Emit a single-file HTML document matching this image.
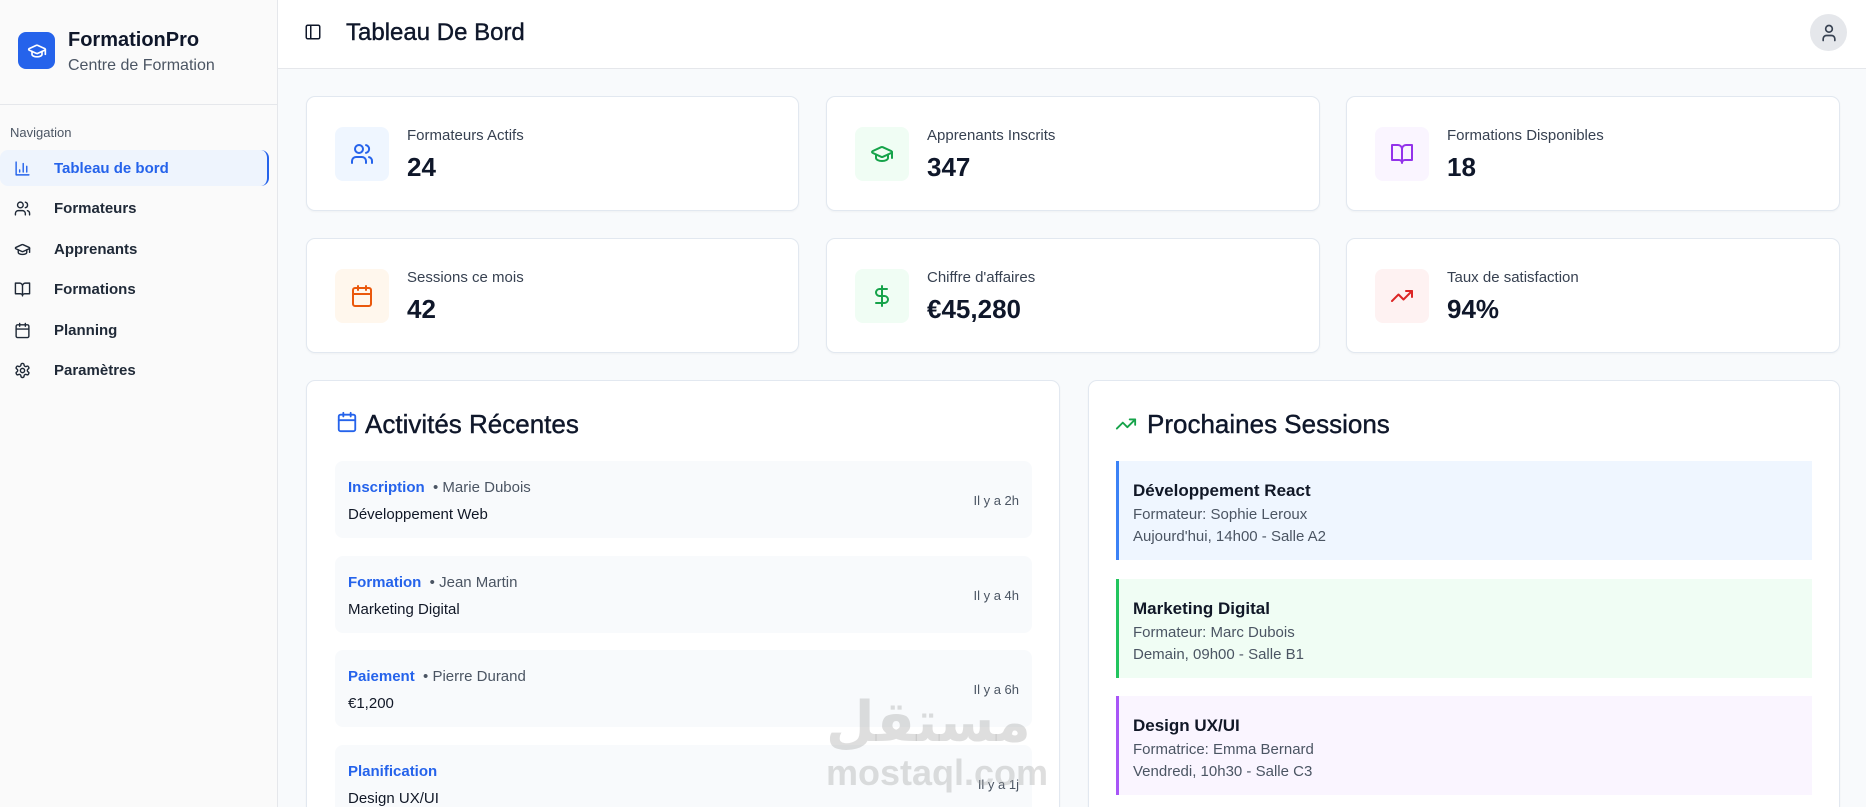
<!DOCTYPE html>
<html><head><meta charset="utf-8"><style>
*{box-sizing:border-box;margin:0;padding:0}
html,body{width:1866px;height:807px;overflow:hidden}
body{font-family:"Liberation Sans",sans-serif;background:#f8fafc;color:#0f172a;position:relative}
svg{fill:none;stroke:currentColor;stroke-width:2;stroke-linecap:round;stroke-linejoin:round}
.side{position:absolute;left:0;top:0;width:278px;height:807px;background:#fafafa;border-right:1px solid #e5e7eb}
.logo{position:absolute;left:18px;top:32px;width:37px;height:37px;background:#2563eb;border-radius:8px;color:#fff;display:flex;align-items:center;justify-content:center}
.brand{position:absolute;left:68px;top:29px;font-size:20px;font-weight:bold}
.sub{position:absolute;left:68px;top:57px;font-size:16px;color:#4b5563}
.div{position:absolute;left:0;top:104px;width:278px;border-top:1px solid #e5e7eb}
.navl{position:absolute;left:10px;top:125px;font-size:13px;color:#4b5563}
.item{position:absolute;left:0;width:269px;height:36px;display:flex;align-items:center;font-size:15px;font-weight:bold;color:#1f2937}
.item svg{position:absolute;left:14px;width:17px;height:17px}
.item span{position:absolute;left:54px}
.item.act{background:#eef4fd;color:#2563eb;border-right:2px solid #2563eb;border-radius:8px}
.head{position:absolute;left:278px;top:0;width:1588px;height:69px;background:#fff;border-bottom:1px solid #e5e7eb}
.main{position:absolute;left:278px;top:69px;width:1588px;height:738px;overflow:hidden}
.card{position:absolute;background:#fff;border:1px solid #e2e8f0;border-radius:9px;box-shadow:0 1px 2px rgba(0,0,0,.04)}
.ib{position:absolute;left:28px;top:30px;width:54px;height:54px;border-radius:8px;display:flex;align-items:center;justify-content:center}
.ib svg{width:24px;height:24px}
.lab{position:absolute;left:100px;top:30px;font-size:15px;color:#374151}
.val{position:absolute;left:100px;top:55px;font-size:26px;font-weight:bold;color:#0f172a}
.ptitle{position:absolute;left:58px;top:28px;font-size:26px;color:#0f172a}
.act-i{position:absolute;left:28px;width:697px;height:77px;background:#f8fafc;border-radius:8px}
.act-i .t{position:absolute;left:13px;top:18px;font-size:15px;color:#1f2937}
.act-i .t b{color:#2563eb}
.act-i .t i{font-style:normal;color:#4b5563}
.act-i .d{position:absolute;left:13px;top:45px;font-size:15px;color:#111827}
.act-i .h{position:absolute;right:13px;top:32px;font-size:13px;color:#4b5563}
.ses{position:absolute;left:27px;width:696px;height:99px;border-left:3px solid}
.ses .a{position:absolute;left:14px;top:20px;font-size:17px;font-weight:bold;color:#111827}
.ses .b{position:absolute;left:14px;top:45px;font-size:15px;color:#4b5563}
.ses .c{position:absolute;left:14px;top:67px;font-size:15px;color:#4b5563}
</style></head><body>
<div class="side">
<div class="logo"><svg width="20" height="20" viewBox="0 0 24 24"><path d="M21.4 10.9a1 1 0 0 0 0-1.8L12.8 5.2a2 2 0 0 0-1.7 0L2.6 9.1a1 1 0 0 0 0 1.8l8.6 3.9a2 2 0 0 0 1.7 0z"/><path d="M22 10v6"/><path d="M6 12.5V16a6 3 0 0 0 12 0v-3.5"/></svg></div>
<div class="brand">FormationPro</div>
<div class="sub">Centre de Formation</div>
<div class="div"></div>
<div class="navl">Navigation</div>
<div class="item act" style="top:150px"><svg viewBox="0 0 24 24"><path d="M3 3v18h18"/><path d="M18 17V9M13 17V5M8 17v-3"/></svg><span>Tableau de bord</span></div>
<div class="item" style="top:190px"><svg viewBox="0 0 24 24"><path d="M16 21v-2a4 4 0 0 0-4-4H6a4 4 0 0 0-4 4v2"/><circle cx="9" cy="7" r="4"/><path d="M22 21v-2a4 4 0 0 0-3-3.9M16 3.1a4 4 0 0 1 0 7.8"/></svg><span>Formateurs</span></div>
<div class="item" style="top:231px"><svg viewBox="0 0 24 24"><path d="M21.4 10.9a1 1 0 0 0 0-1.8L12.8 5.2a2 2 0 0 0-1.7 0L2.6 9.1a1 1 0 0 0 0 1.8l8.6 3.9a2 2 0 0 0 1.7 0z"/><path d="M22 10v6"/><path d="M6 12.5V16a6 3 0 0 0 12 0v-3.5"/></svg><span>Apprenants</span></div>
<div class="item" style="top:271px"><svg viewBox="0 0 24 24"><path d="M2 3h6a4 4 0 0 1 4 4v14a3 3 0 0 0-3-3H2zM22 3h-6a4 4 0 0 0-4 4v14a3 3 0 0 1 3-3h7z"/></svg><span>Formations</span></div>
<div class="item" style="top:312px"><svg viewBox="0 0 24 24"><rect x="3" y="4" width="18" height="18" rx="2"/><path d="M16 2v4M8 2v4M3 10h18"/></svg><span>Planning</span></div>
<div class="item" style="top:352px"><svg viewBox="0 0 24 24"><path d="M12.2 2h-.4a2 2 0 0 0-2 2v.2a2 2 0 0 1-1 1.7l-.4.3a2 2 0 0 1-2 0l-.2-.1a2 2 0 0 0-2.7.7l-.2.4a2 2 0 0 0 .7 2.7l.2.1a2 2 0 0 1 1 1.7v.5a2 2 0 0 1-1 1.7l-.2.1a2 2 0 0 0-.7 2.7l.2.4a2 2 0 0 0 2.7.7l.2-.1a2 2 0 0 1 2 0l.4.3a2 2 0 0 1 1 1.7v.2a2 2 0 0 0 2 2h.4a2 2 0 0 0 2-2v-.2a2 2 0 0 1 1-1.7l.4-.3a2 2 0 0 1 2 0l.2.1a2 2 0 0 0 2.7-.7l.2-.4a2 2 0 0 0-.7-2.7l-.2-.1a2 2 0 0 1-1-1.7v-.5a2 2 0 0 1 1-1.7l.2-.1a2 2 0 0 0 .7-2.7l-.2-.4a2 2 0 0 0-2.7-.7l-.2.1a2 2 0 0 1-2 0l-.4-.3a2 2 0 0 1-1-1.7V4a2 2 0 0 0-2-2z"/><circle cx="12" cy="12" r="3"/></svg><span>Paramètres</span></div>
</div>
<div class="head">
<svg style="position:absolute;left:26px;top:23px" width="18" height="18" viewBox="0 0 24 24"><rect x="3" y="3" width="18" height="18" rx="2"/><path d="M9 3v18"/></svg>
<div style="position:absolute;left:68px;top:19px;font-size:24px;color:#0f172a;-webkit-text-stroke:0.4px #0f172a">Tableau De Bord</div>
<div style="position:absolute;right:19px;top:14px;width:37px;height:37px;border-radius:50%;background:#e5e7eb;color:#374151;display:flex;align-items:center;justify-content:center"><svg width="20" height="20" viewBox="0 0 24 24"><path d="M19 21v-2a4 4 0 0 0-4-4H9a4 4 0 0 0-4 4v2"/><circle cx="12" cy="7" r="4"/></svg></div>
</div>
<div class="main">
<div class="card" style="left:28px;top:27px;width:493px;height:115px"><div class="ib" style="background:#eff6ff;color:#2563eb"><svg viewBox="0 0 24 24"><path d="M16 21v-2a4 4 0 0 0-4-4H6a4 4 0 0 0-4 4v2"/><circle cx="9" cy="7" r="4"/><path d="M22 21v-2a4 4 0 0 0-3-3.9M16 3.1a4 4 0 0 1 0 7.8"/></svg></div><div class="lab">Formateurs Actifs</div><div class="val">24</div></div>
<div class="card" style="left:548px;top:27px;width:494px;height:115px"><div class="ib" style="background:#f0fdf4;color:#16a34a"><svg viewBox="0 0 24 24"><path d="M21.4 10.9a1 1 0 0 0 0-1.8L12.8 5.2a2 2 0 0 0-1.7 0L2.6 9.1a1 1 0 0 0 0 1.8l8.6 3.9a2 2 0 0 0 1.7 0z"/><path d="M22 10v6"/><path d="M6 12.5V16a6 3 0 0 0 12 0v-3.5"/></svg></div><div class="lab">Apprenants Inscrits</div><div class="val">347</div></div>
<div class="card" style="left:1068px;top:27px;width:494px;height:115px"><div class="ib" style="background:#faf5ff;color:#9333ea"><svg viewBox="0 0 24 24"><path d="M2 3h6a4 4 0 0 1 4 4v14a3 3 0 0 0-3-3H2zM22 3h-6a4 4 0 0 0-4 4v14a3 3 0 0 1 3-3h7z"/></svg></div><div class="lab">Formations Disponibles</div><div class="val">18</div></div>
<div class="card" style="left:28px;top:169px;width:493px;height:115px"><div class="ib" style="background:#fff7ed;color:#ea580c"><svg viewBox="0 0 24 24"><rect x="3" y="4" width="18" height="18" rx="2"/><path d="M16 2v4M8 2v4M3 10h18"/></svg></div><div class="lab">Sessions ce mois</div><div class="val">42</div></div>
<div class="card" style="left:548px;top:169px;width:494px;height:115px"><div class="ib" style="background:#f0fdf4;color:#16a34a"><svg viewBox="0 0 24 24"><path d="M12 2v20M17 5H9.5a3.5 3.5 0 0 0 0 7h5a3.5 3.5 0 0 1 0 7H6"/></svg></div><div class="lab">Chiffre d'affaires</div><div class="val">€45,280</div></div>
<div class="card" style="left:1068px;top:169px;width:494px;height:115px"><div class="ib" style="background:#fef2f2;color:#dc2626"><svg viewBox="0 0 24 24"><path d="M22 7l-8.5 8.5-5-5L2 17"/><path d="M16 7h6v6"/></svg></div><div class="lab">Taux de satisfaction</div><div class="val">94%</div></div>

<div class="card" style="left:28px;top:311px;width:754px;height:460px">
<svg style="position:absolute;left:29px;top:30px;color:#2563eb" width="22" height="22" viewBox="0 0 24 24"><rect x="3" y="4" width="18" height="18" rx="2"/><path d="M16 2v4M8 2v4M3 10h18"/></svg>
<div class="ptitle" style="-webkit-text-stroke:0.4px #0f172a">Activités Récentes</div>
<div class="act-i" style="top:80px"><div class="t"><b>Inscription</b> <i>&nbsp;• Marie Dubois</i></div><div class="d">Développement Web</div><div class="h">Il y a 2h</div></div>
<div class="act-i" style="top:175px"><div class="t"><b>Formation</b> <i>&nbsp;• Jean Martin</i></div><div class="d">Marketing Digital</div><div class="h">Il y a 4h</div></div>
<div class="act-i" style="top:269px"><div class="t"><b>Paiement</b> <i>&nbsp;• Pierre Durand</i></div><div class="d">€1,200</div><div class="h">Il y a 6h</div></div>
<div class="act-i" style="top:364px"><div class="t"><b>Planification</b></div><div class="d">Design UX/UI</div><div class="h">Il y a 1j</div></div>
</div>
<div class="card" style="left:810px;top:311px;width:752px;height:460px">
<svg style="position:absolute;left:26px;top:32px;color:#16a34a" width="22" height="22" viewBox="0 0 24 24"><path d="M22 7l-8.5 8.5-5-5L2 17"/><path d="M16 7h6v6"/></svg>
<div class="ptitle" style="left:58px;-webkit-text-stroke:0.4px #0f172a">Prochaines Sessions</div>
<div class="ses" style="top:80px;background:#eff6ff;border-color:#3b82f6"><div class="a">Développement React</div><div class="b">Formateur: Sophie Leroux</div><div class="c">Aujourd'hui, 14h00 - Salle A2</div></div>
<div class="ses" style="top:198px;background:#f0fdf4;border-color:#22c55e"><div class="a">Marketing Digital</div><div class="b">Formateur: Marc Dubois</div><div class="c">Demain, 09h00 - Salle B1</div></div>
<div class="ses" style="top:315px;background:#faf5ff;border-color:#a855f7"><div class="a">Design UX/UI</div><div class="b">Formatrice: Emma Bernard</div><div class="c">Vendredi, 10h30 - Salle C3</div></div>
</div>
<div style="position:absolute;left:548px;top:621px;font-family:'DejaVu Sans',sans-serif;font-size:56px;font-weight:bold;color:rgba(160,160,160,.35)">مستقل</div>
<div style="position:absolute;left:548px;top:683px;font-size:36px;font-weight:bold;color:rgba(160,160,160,.35)">mostaql.com</div>
</div>
</body></html>
